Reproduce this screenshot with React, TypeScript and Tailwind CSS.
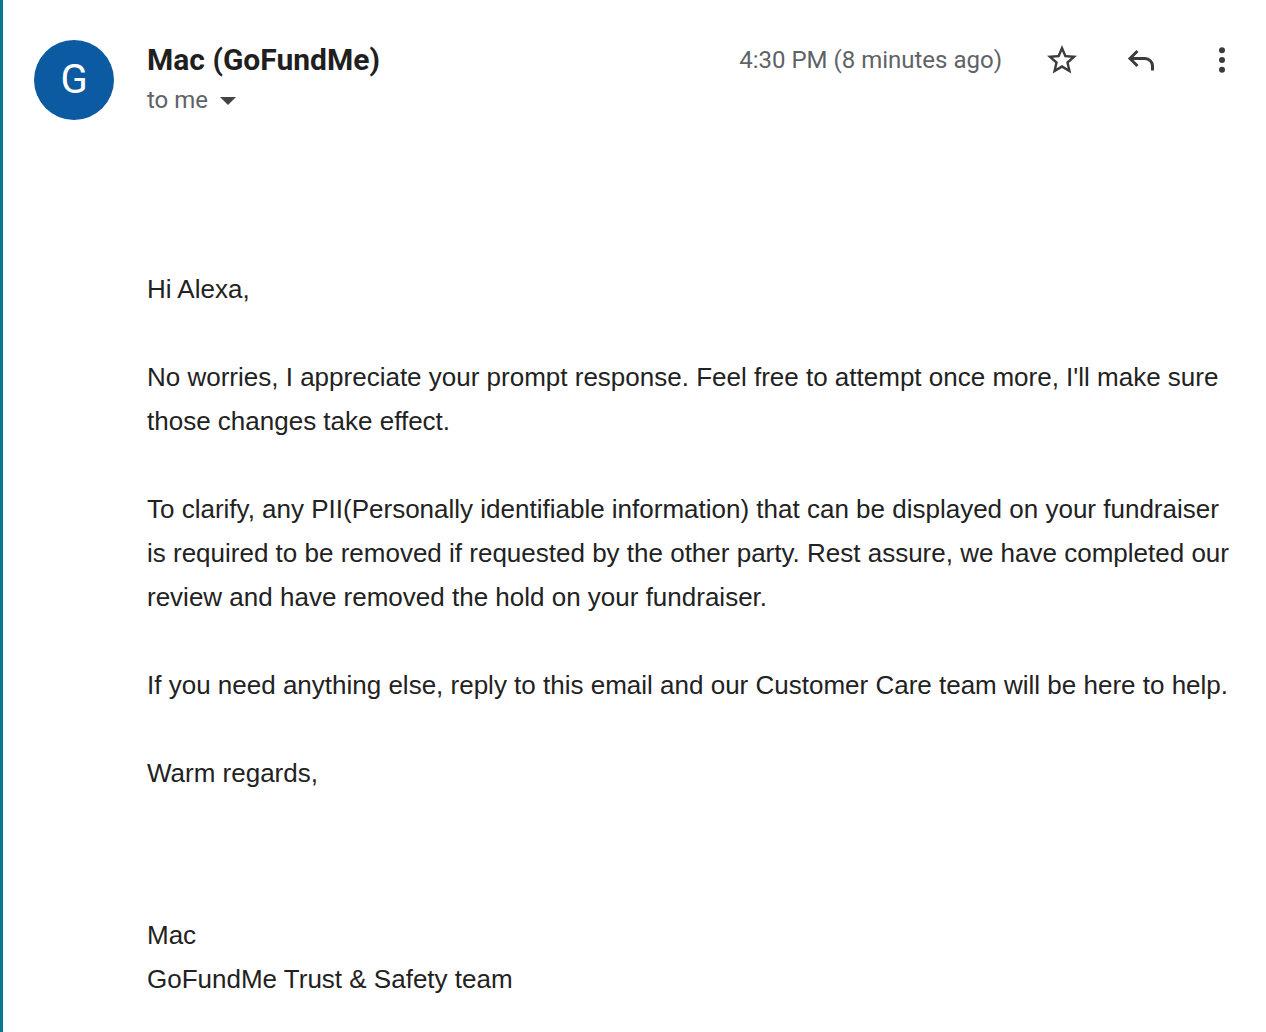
import React from 'react';

const paragraphs: string[] = [
  'Hi Alexa,',
  "No worries, I appreciate your prompt response. Feel free to attempt once more, I'll make sure those changes take effect.",
  'To clarify, any PII(Personally identifiable information) that can be displayed on your fundraiser is required to be removed if requested by the other party. Rest assure, we have completed our review and have removed the hold on your fundraiser.',
  'If you need anything else, reply to this email and our Customer Care team will be here to help.',
  'Warm regards,',
];

function StarIcon() {
  return (
    <svg viewBox="0 0 24 24" className="w-[36px] h-[36px]" fill="#3c3c3c">
      <path d="M22 9.24l-7.19-.62L12 2 9.19 8.63 2 9.24l5.46 4.73L5.82 21 12 17.27 18.18 21l-1.63-7.03L22 9.24zM12 15.4l-3.76 2.27 1-4.28-3.32-2.88 4.38-.38L12 6.1l1.71 4.04 4.38.38-3.32 2.88 1 4.28L12 15.4z" />
    </svg>
  );
}

function ReplyIcon() {
  return (
    <svg viewBox="0 0 24 24" className="w-[36px] h-[36px]" fill="none" stroke="#3c3c3c" strokeWidth="2" strokeLinecap="butt" strokeLinejoin="miter">
      <path d="M9 6l-5 5 5 5" />
      <path d="M4.5 11H14a5 5 0 0 1 5 5v3" />
    </svg>
  );
}

function MoreIcon() {
  return (
    <svg viewBox="0 0 24 24" className="w-[36px] h-[36px]" fill="#3c3c3c">
      <circle cx="12" cy="5.5" r="2" />
      <circle cx="12" cy="12" r="2" />
      <circle cx="12" cy="18.5" r="2" />
    </svg>
  );
}

export default function App() {
  return (
    <div className="w-[1266px] h-[1032px] bg-white border-l-[3px] border-[#0b7794] overflow-hidden">
      {/* Header */}
      <div className="flex items-start pt-[40px] pl-[31px] pr-[26px]">
        <div className="w-[80px] h-[80px] rounded-full bg-[#0b5aa2] flex items-center justify-center text-white text-[40px] font-['Roboto',sans-serif] shrink-0">
          G
        </div>
        <div className="ml-[33px] flex flex-col font-['Roboto',sans-serif]">
          <span className="text-[30px] leading-[40px] font-bold text-[#1f1f1f]">Mac (GoFundMe)</span>
          <span className="flex items-center text-[24px] leading-[40px] text-[#5f6368]">
            to me
            <svg viewBox="0 0 10 5" className="w-[16px] h-[8px] ml-[12px] mt-[2px]" fill="#444">
              <path d="M0 0l5 5 5-5z" />
            </svg>
          </span>
        </div>
        <div className="flex-1" />
        <div className="flex items-center h-[40px] font-['Roboto',sans-serif]">
          <span className="text-[24px] text-[#5f6368] mr-[42px]">4:30 PM (8 minutes ago)</span>
          <div className="flex items-center gap-[44px]">
            <StarIcon />
            <ReplyIcon />
            <MoreIcon />
          </div>
        </div>
      </div>

      {/* Body */}
      <div className="pl-[144px] pr-[28px] pt-[147px] font-['Liberation_Sans',Arial,sans-serif] text-[26px] leading-[44px] text-[#222222]">
        {paragraphs.map((p, i) => (
          <p key={i} className="mb-[44px]">
            {p}
          </p>
        ))}
        <div className="mt-[118px]">
          <p>Mac</p>
          <p>GoFundMe Trust &amp; Safety team</p>
        </div>
      </div>
    </div>
  );
}
